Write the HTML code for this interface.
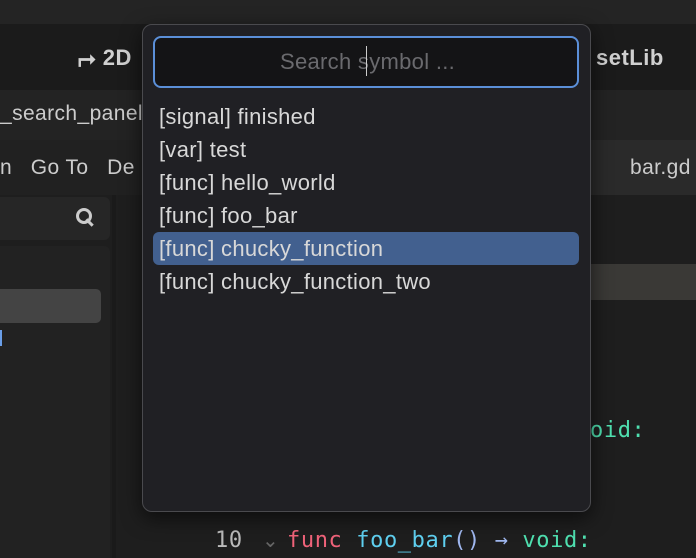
<!DOCTYPE html><html><head><style>
body{margin:0;width:696px;height:558px;overflow:hidden;background:#1e1e1e;font-family:"Liberation Sans",sans-serif;position:relative}
div,span{position:absolute}
.mono{font-family:"DejaVu Sans Mono","Liberation Mono",monospace;font-size:22px;letter-spacing:0.6px}
</style></head><body>
<div style="left:0;top:0;width:696px;height:24px;background:#242424"></div>
<div style="left:0;top:24px;width:696px;height:66px;background:#1b1b1b"></div>
<div style="left:78px;top:45px;color:#d0d0d0;font-weight:bold;font-size:22px;letter-spacing:0.5px">⮣ 2D</div>
<div style="left:596px;top:45px;color:#d0d0d0;font-weight:bold;font-size:22px;letter-spacing:0.5px">setLib</div>
<div style="left:0;top:90px;width:696px;height:50px;background:#232323"></div>
<div style="left:0;top:102px;color:#ccc;font-size:21px;letter-spacing:0.4px">_search_panel</div>
<div style="left:0;top:140px;width:696px;height:55px;background:#212121"></div>
<div style="left:590px;top:140px;width:106px;height:55px;background:#2a2a2a"></div>
<div style="left:630px;top:156px;color:#ccc;font-size:21px;letter-spacing:0.4px">bar.gd</div>
<div style="left:0;top:156px;color:#ccc;font-size:21px;letter-spacing:0.4px">n&nbsp;&nbsp;&nbsp;Go To&nbsp;&nbsp;&nbsp;De</div>
<div style="left:0;top:195px;width:112px;height:363px;background:#1e1e1e"></div>
<div style="left:0;top:197px;width:110px;height:43px;background:#262626;border-radius:0 6px 6px 0"></div>
<div style="left:76px;top:208px;width:10px;height:10px;border:3px solid #ccc;border-radius:50%"></div>
<div style="left:88px;top:218px;width:3px;height:9px;background:#ccc;transform:rotate(-45deg)"></div>
<div style="left:0;top:246px;width:110px;height:312px;background:#222;border-radius:0 6px 0 0"></div>
<div style="left:0;top:289px;width:101px;height:34px;background:#444;border-radius:0 5px 5px 0"></div>
<div style="left:0;top:330px;width:2px;height:16px;background:#6a9ee8"></div>
<div style="left:112px;top:195px;width:4px;height:363px;background:#1a1a1a"></div>
<div style="left:578px;top:264px;width:118px;height:36px;background:#3a3936"></div>
<div class="mono" style="left:590px;top:418px;color:#4fe0b0">oid:</div>
<div class="mono" style="left:215px;top:528px;color:#bbb">10</div>
<div style="left:262px;top:528px;color:#666;font-size:20px">⌄</div>
<div class="mono" style="left:287px;top:528px"><span style="position:static;color:#f0637a">func</span> <span style="position:static;color:#5fd0f0">foo_bar</span><span style="position:static;color:#a0b8f0">() → </span><span style="position:static;color:#4fe0b0">void:</span></div>
<div style="left:142px;top:24px;width:447px;height:486px;background:#202024;border:1px solid #4a4a4e;border-radius:10px;box-shadow:0 6px 20px rgba(0,0,0,.6)"></div>
<div style="left:153px;top:36px;width:422px;height:48px;background:#141416;border:2px solid #5b8fd8;border-radius:8px"></div>
<div style="left:280px;top:49px;color:#6a6a6e;font-size:22px;letter-spacing:0.3px">Search symbol ...</div>
<div style="left:366px;top:46px;width:1px;height:30px;background:#ccc"></div>
<div style="left:153px;top:232px;width:426px;height:33px;background:#42608f;border-radius:6px"></div>
<div style="left:159px;top:100px;color:#d8d8d8;font-size:22px;line-height:33px;letter-spacing:0.3px">[signal] finished<br>[var] test<br>[func] hello_world<br>[func] foo_bar<br>[func] chucky_function<br>[func] chucky_function_two</div>
</body></html>
